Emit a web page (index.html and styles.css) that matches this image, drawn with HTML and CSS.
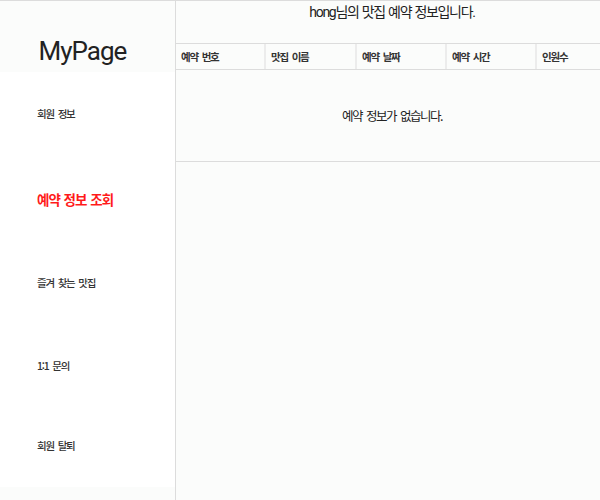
FILE: index.html
```html
<!DOCTYPE html>
<html lang="ko">
<head>
<meta charset="utf-8">
<title>MyPage</title>
<link rel="stylesheet" href="styles.css">
</head>
<body>
<div class="page">
  <aside class="sidebar">
    <div class="brand">MyPage</div>
    <nav class="menu">
      <a class="menu-item" href="#">회원 정보</a>
      <a class="menu-item active" href="#">예약 정보 조회</a>
      <a class="menu-item" href="#">즐겨 찾는 맛집</a>
      <a class="menu-item" href="#">1:1 문의</a>
      <a class="menu-item" href="#">회원 탈퇴</a>
    </nav>
  </aside>
  <main class="content">
    <h1 class="title">hong님의 맛집 예약 정보입니다.</h1>
    <div class="table">
      <div class="thead">
        <div class="th">예약 번호</div>
        <div class="th">맛집 이름</div>
        <div class="th">예약 날짜</div>
        <div class="th">예약 시간</div>
        <div class="th">인원수</div>
      </div>
      <div class="empty">예약 정보가 없습니다.</div>
    </div>
  </main>
</div>
</body>
</html>
```
FILE: styles.css
```css
html, body {
  margin: 0;
  padding: 0;
}
body {
  background: #fbfcfb;
  font-family: Roboto, "Noto Sans CJK KR", sans-serif;
  color: #222;
  overflow: hidden;
  height: 500px;
  border-top: 1px solid #dcdcdc;
  box-sizing: border-box;
}
.page {
  display: flex;
  height: 499px;
}
.sidebar {
  width: 175px;
  flex: none;
  border-right: 1px solid #dcdcdc;
  display: flex;
  flex-direction: column;
}
.brand {
  height: 71px;
  display: flex;
  align-items: center;
  justify-content: center;
  font-size: 26px;
  letter-spacing: -1px;
  color: #222;
  padding-top: 28px;
  padding-right: 10px;
  box-sizing: border-box;
}
.menu {
  background: #fff;
  display: flex;
  flex-direction: column;
}
.menu-item {
  height: 83px;
  box-sizing: border-box;
  display: flex;
  align-items: center;
  padding-left: 37px;
  font-size: 10.5px;
  letter-spacing: -1.2px;
  word-spacing: 2px;
  color: #333;
  text-decoration: none;
  font-family: "Noto Sans CJK KR", sans-serif;
  font-weight: 500;
}
.menu-item:nth-child(3),
.menu-item:nth-child(4) { padding-top: 6px; }
.menu-item.active {
  color: #ff1a1a;
  font-size: 13.5px;
  font-weight: 700;
  letter-spacing: -1px;
  word-spacing: 1px;
  padding-top: 4px;
}
.content {
  flex: 1;
  min-width: 0;
  display: flex;
  flex-direction: column;
}
.title {
  margin: 0;
  height: 42px;
  font-size: 14px;
  font-weight: 400;
  letter-spacing: -1.3px;
  word-spacing: 1px;
  text-align: center;
  line-height: 22px;
  padding-left: 8px;
  color: #222;
  box-sizing: border-box;
}
.table {
  display: flex;
  flex-direction: column;
}
.thead {
  display: grid;
  grid-template-columns: 90px 91px 90px 90px 90px;
  border-top: 1px solid #dcdcdc;
  border-bottom: 1px solid #dcdcdc;
  height: 27px;
  box-sizing: border-box;
}
.th {
  display: flex;
  align-items: center;
  padding-left: 5px;
  font-family: "Noto Sans CJK KR", sans-serif;
  font-size: 10.5px;
  font-weight: 700;
  letter-spacing: -1.2px;
  word-spacing: 2px;
  color: #333;
  border-right: 2px solid #ececec;
}
.empty {
  height: 92px;
  border-bottom: 1px solid #dcdcdc;
  display: flex;
  align-items: center;
  justify-content: center;
  padding-left: 8px;
  font-family: "Noto Sans CJK KR", sans-serif;
  font-size: 12.5px;
  letter-spacing: -1.5px;
  word-spacing: 2px;
  color: #222;
  box-sizing: border-box;
}
```
